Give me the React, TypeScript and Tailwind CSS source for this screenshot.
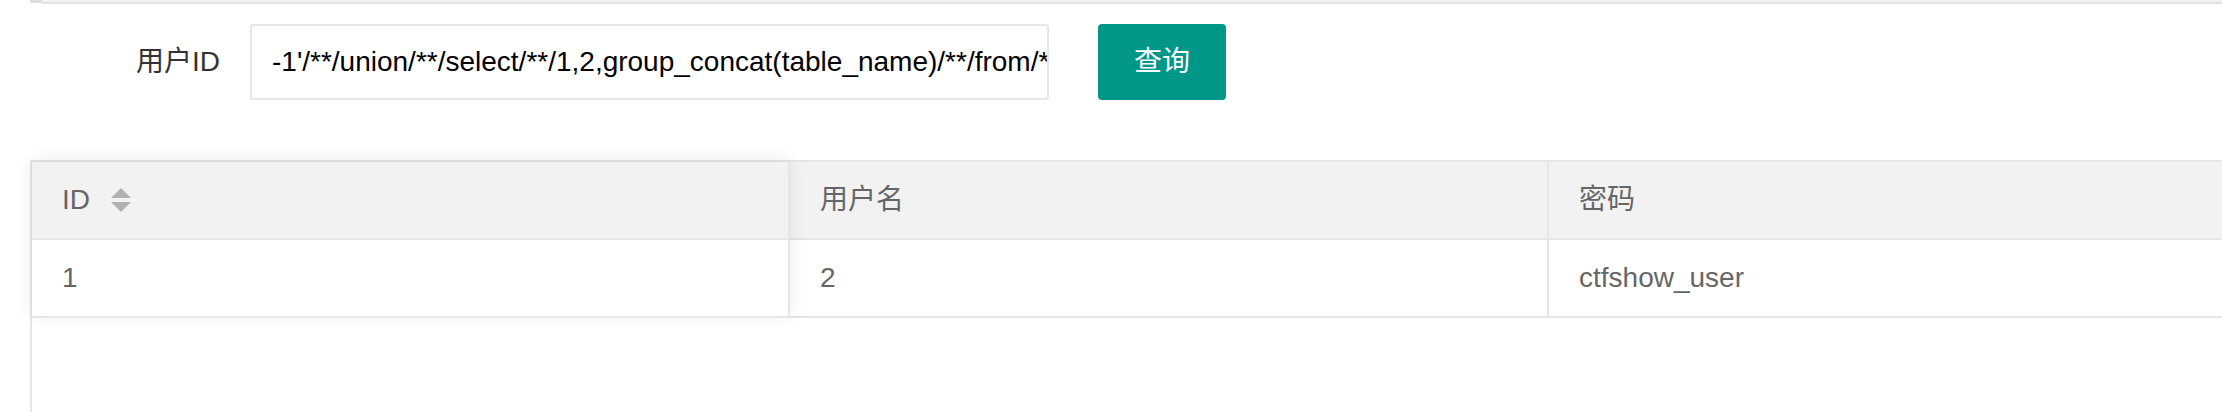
import React from "react";

const FONT = '"Liberation Sans", "Noto Sans CJK SC", Arial, sans-serif';

const QUERY =
  "-1'/**/union/**/select/**/1,2,group_concat(table_name)/**/from/**/information_schema.tables/**/where/**/table_schema=database()%23";

function SortIcon() {
  return (
    <svg width="20" height="24" viewBox="0 0 20 24" className="ml-[21px] shrink-0">
      <polygon points="0,10 10,0 20,10" fill="#b2b2b2" />
      <polygon points="0,14 20,14 10,24" fill="#b2b2b2" />
    </svg>
  );
}

const rows = [{ id: "1", username: "2", password: "ctfshow_user" }];

export default function App() {
  return (
    <div
      className="w-full h-[412px] overflow-hidden bg-white"
      style={{ fontFamily: FONT }}
    >
      {/* bottom edge of the box above, scrolled off */}
      <div className="ml-[30px] flex h-[4px]">
        <div className="w-[12px] h-[3px] bg-[#dedede]" />
        <div className="flex-1 h-[4px] bg-[#f2f2f2] border-b-2 border-[#e2e2e2]" />
      </div>

      <div className="pl-[30px] pt-[20px]">
        {/* search form */}
        <div className="flex items-center h-[76px]">
          <label className="w-[220px] pr-[30px] text-right text-[28px] text-[#333] leading-[76px]">
            用户ID
          </label>
          <input
            readOnly
            defaultValue={QUERY}
            className="w-[799px] h-[76px] border-2 border-[#e6e6e6] rounded-[3px] pl-[20px] text-[28px] text-black bg-white outline-none"
            style={{ fontFamily: FONT }}
          />
          <button className="ml-[49px] w-[128px] h-[76px] rounded-[4px] bg-[#009688] text-white text-[28px]">
            查询
          </button>
        </div>

        {/* result table */}
        <div className="mt-[60px] h-[300px] border-l-2 border-t-2 border-[#e6e6e6] text-[28px] text-[#666]">
          <div className="flex">
            <div className="relative z-10 w-[758px] shrink-0 bg-white shadow-[0_-2px_16px_rgba(0,0,0,0.08)]">
              <div className="h-[78px] flex items-center px-[30px] bg-[#f2f2f2] border-b-2 border-r-2 border-[#e6e6e6]">
                <span>ID</span>
                <SortIcon />
              </div>
              {rows.map((r) => (
                <div
                  key={r.id}
                  className="h-[78px] flex items-center px-[30px] border-b-2 border-r-2 border-[#e6e6e6]"
                >
                  {r.id}
                </div>
              ))}
            </div>
            <div className="w-[759px] shrink-0">
              <div className="h-[78px] flex items-center px-[30px] bg-[#f2f2f2] border-b-2 border-r-2 border-[#e6e6e6]">
                用户名
              </div>
              {rows.map((r) => (
                <div
                  key={r.id}
                  className="h-[78px] flex items-center px-[30px] border-b-2 border-r-2 border-[#e6e6e6]"
                >
                  {r.username}
                </div>
              ))}
            </div>
            <div className="flex-1">
              <div className="h-[78px] flex items-center px-[30px] bg-[#f2f2f2] border-b-2 border-[#e6e6e6]">
                密码
              </div>
              {rows.map((r) => (
                <div
                  key={r.id}
                  className="h-[78px] flex items-center px-[30px] border-b-2 border-[#e6e6e6]"
                >
                  {r.password}
                </div>
              ))}
            </div>
          </div>
        </div>
      </div>
    </div>
  );
}
